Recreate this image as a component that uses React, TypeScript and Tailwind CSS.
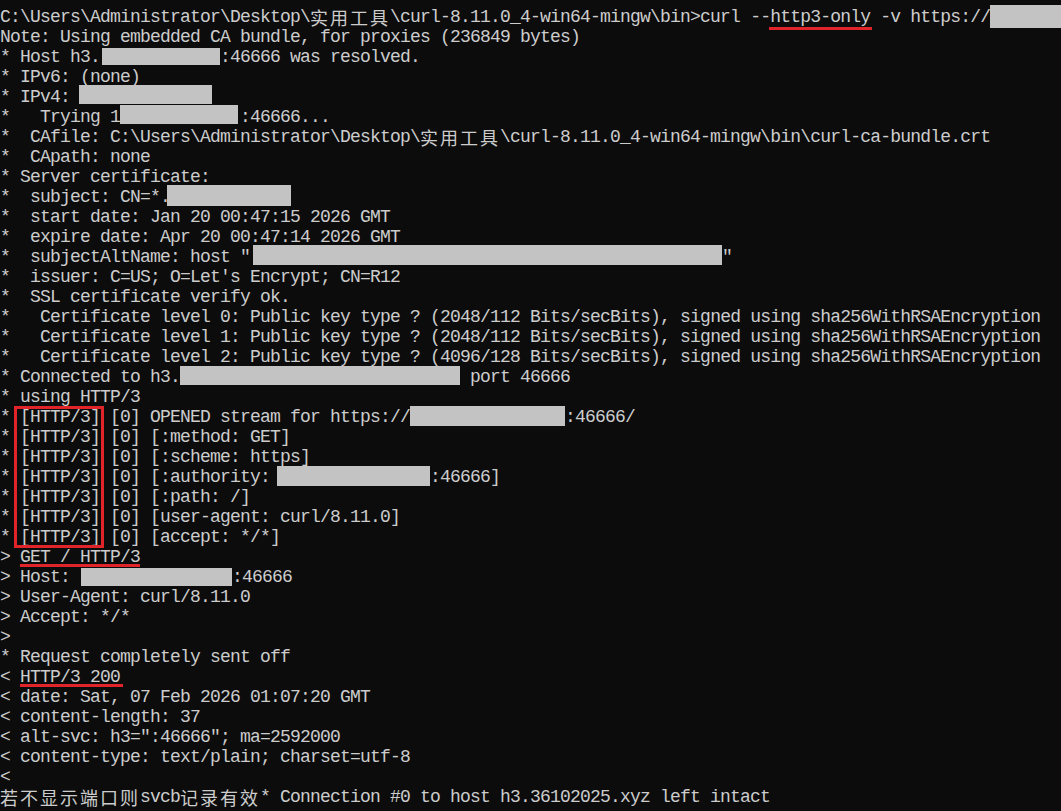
import type { ReactNode } from "react";

function Line({ children }: { children?: ReactNode }) {
  return <div className="flex h-[20px] items-start whitespace-pre leading-[23px]">{children}</div>;
}

function Box({ className }: { className: string }) {
  return <span className={"block shrink-0 bg-[#c3c3c3] " + className} />;
}

function Cjk({ children }: { children: string }) {
  return <span className="font-['Noto_Sans_CJK_SC',sans-serif] leading-[22px] tracking-[2px]">{children}</span>;
}

const http3 = [
  "[:method: GET]",
  "[:scheme: https]",
];

export default function App() {
  return (
    <div className="relative h-[811px] w-[1061px] overflow-hidden bg-[#0c0c0c] pt-[6px] font-['Liberation_Mono','Noto_Sans_CJK_SC',monospace] text-[18px] tracking-[-0.8px] text-[#cccccc]">
      <Line>
        <span>C:\Users\Administrator\Desktop\</span>
        <Cjk>实用工具</Cjk>
        <span>\curl-8.11.0_4-win64-mingw\bin&gt;curl --http3-only -v https://</span>
        <Box className="-mt-[1px] h-[23px] w-[80px]" />
      </Line>
      <Line>Note: Using embedded CA bundle, for proxies (236849 bytes)</Line>
      <Line>
        <span>* Host h3.</span>
        <Box className="ml-[2px] mt-[2px] h-[17px] w-[118px]" />
        <span>:46666 was resolved.</span>
      </Line>
      <Line>* IPv6: (none)</Line>
      <Line>
        <span>* IPv4: </span>
        <Box className="-ml-[1px] -mt-[1px] h-[19px] w-[133px]" />
      </Line>
      <Line>
        <span>*   Trying 1</span>
        <Box className="mr-[2px] -mt-[1px] h-[19px] w-[118px]" />
        <span>:46666...</span>
      </Line>
      <Line>
        <span>*  CAfile: C:\Users\Administrator\Desktop\</span>
        <Cjk>实用工具</Cjk>
        <span>\curl-8.11.0_4-win64-mingw\bin\curl-ca-bundle.crt</span>
      </Line>
      <Line>*  CApath: none</Line>
      <Line>* Server certificate:</Line>
      <Line>
        <span>*  subject: CN=*.</span>
        <Box className="-ml-[3px] -mt-[1px] h-[21px] w-[124px]" />
      </Line>
      <Line>*  start date: Jan 20 00:47:15 2026 GMT</Line>
      <Line>*  expire date: Apr 20 00:47:14 2026 GMT</Line>
      <Line>
        <span>*  subjectAltName: host "</span>
        <Box className="ml-[3px] -mt-[1px] h-[20px] w-[469px]" />
        <span>"</span>
      </Line>
      <Line>*  issuer: C=US; O=Let's Encrypt; CN=R12</Line>
      <Line>*  SSL certificate verify ok.</Line>
      <Line>*   Certificate level 0: Public key type ? (2048/112 Bits/secBits), signed using sha256WithRSAEncryption</Line>
      <Line>*   Certificate level 1: Public key type ? (2048/112 Bits/secBits), signed using sha256WithRSAEncryption</Line>
      <Line>*   Certificate level 2: Public key type ? (4096/128 Bits/secBits), signed using sha256WithRSAEncryption</Line>
      <Line>
        <span>* Connected to h3.</span>
        <Box className="mt-[0px] h-[19px] w-[280px]" />
        <span> port 46666</span>
      </Line>
      <Line>* using HTTP/3</Line>
      <Line>
        <span>* [HTTP/3] [0] OPENED stream for https://</span>
        <Box className="mt-[0px] h-[20px] w-[155px]" />
        <span>:46666/</span>
      </Line>
      {http3.map((t) => (
        <Line key={t}>* [HTTP/3] [0] {t}</Line>
      ))}
      <Line>
        <span>* [HTTP/3] [0] [:authority: </span>
        <Box className="-ml-[3px] mt-[0px] h-[20px] w-[153px]" />
        <span>:46666]</span>
      </Line>
      <Line>* [HTTP/3] [0] [:path: /]</Line>
      <Line>* [HTTP/3] [0] [user-agent: curl/8.11.0]</Line>
      <Line>* [HTTP/3] [0] [accept: */*]</Line>
      <Line>&gt; GET / HTTP/3</Line>
      <Line>
        <span>&gt; Host: </span>
        <Box className="ml-[1px] mt-[2px] h-[18px] w-[151px]" />
        <span>:46666</span>
      </Line>
      <Line>&gt; User-Agent: curl/8.11.0</Line>
      <Line>&gt; Accept: */*</Line>
      <Line>&gt;</Line>
      <Line>* Request completely sent off</Line>
      <Line>&lt; HTTP/3 200</Line>
      <Line>&lt; date: Sat, 07 Feb 2026 01:07:20 GMT</Line>
      <Line>&lt; content-length: 37</Line>
      <Line>&lt; alt-svc: h3=":46666"; ma=2592000</Line>
      <Line>&lt; content-type: text/plain; charset=utf-8</Line>
      <Line>&lt;</Line>
      <Line>
        <Cjk>若不显示端口则</Cjk>
        <span>svcb</span>
        <Cjk>记录有效</Cjk>
        <span>* Connection #0 to host h3.36102025.xyz left intact</span>
      </Line>

      {/* red annotations */}
      <div className="absolute left-[769px] top-[27px] h-[3px] w-[103px] bg-[#e0242a]" />
      <div className="absolute left-[14px] top-[406px] h-[142px] w-[90px] border-[3px] border-[#e0242a]" />
      <div className="absolute left-[20px] top-[564px] h-[3px] w-[120px] bg-[#e0242a]" />
      <div className="absolute left-[20px] top-[684px] h-[3px] w-[103px] bg-[#e0242a]" />
    </div>
  );
}
